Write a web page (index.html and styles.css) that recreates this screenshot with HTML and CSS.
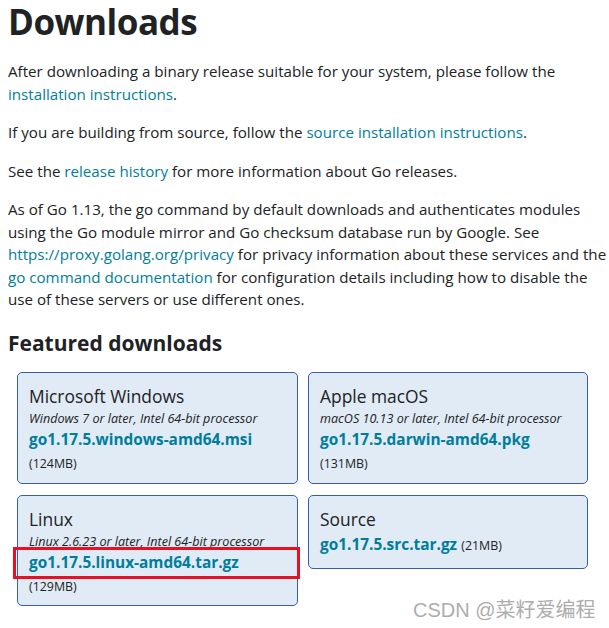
FILE: index.html
```html
<!DOCTYPE html>
<html>
<head>
<meta charset="utf-8">
<link rel="stylesheet" href="styles.css">
</head>
<body>
<main class="page">
  <h1 class="title">Downloads</h1>
  <p class="para">After downloading a binary release suitable for your system, please follow the <a class="link" href="#">installation instructions</a>.</p>
  <p class="para">If you are building from source, follow the <a class="link" href="#">source installation instructions</a>.</p>
  <p class="para">See the <a class="link" href="#">release history</a> for more information about Go releases.</p>
  <p class="para">As of Go 1.13, the go command by default downloads and authenticates modules using the Go module mirror and Go checksum database run by Google. See <a class="link" href="#">https://proxy.golang.org/privacy</a> for privacy information about these services and the <a class="link" href="#">go command documentation</a> for configuration details including how to disable the use of these servers or use different ones.</p>
  <h2 class="subtitle">Featured downloads</h2>
  <div class="grid">
    <div class="card">
      <div class="os">Microsoft Windows</div>
      <div class="req">Windows 7 or later, Intel 64-bit processor</div>
      <a class="file" href="#">go1.17.5.windows-amd64.msi</a>
      <div class="size">(124MB)</div>
    </div>
    <div class="card">
      <div class="os">Apple macOS</div>
      <div class="req">macOS 10.13 or later, Intel 64-bit processor</div>
      <a class="file" href="#">go1.17.5.darwin-amd64.pkg</a>
      <div class="size">(131MB)</div>
    </div>
    <div class="card card-linux">
      <div class="os">Linux</div>
      <div class="req">Linux 2.6.23 or later, Intel 64-bit processor</div>
      <a class="file" href="#">go1.17.5.linux-amd64.tar.gz</a>
      <div class="size">(129MB)</div>
      <span class="highlight"></span>
    </div>
    <div class="card card-source">
      <div class="os">Source</div>
      <div class="inline"><a class="file" href="#">go1.17.5.src.tar.gz</a> <span class="size-inline">(21MB)</span></div>
    </div>
  </div>
</main>
<div class="watermark">CSDN @菜籽爱编程</div>
</body>
</html>
```
FILE: styles.css
```css
html, body {
  margin: 0;
  padding: 0;
  background: #fff;
}
body {
  font-family: "Open Sans", "Noto Sans", sans-serif;
  color: #202224;
  width: 609px;
  height: 628px;
  overflow: hidden;
  position: relative;
}
.page {
  padding: 0 0 0 8px;
}
.title {
  font-size: 35px;
  font-weight: 700;
  margin: 0;
  padding-top: 0;
  line-height: 44px;
  letter-spacing: -0.5px;
}
.para {
  font-size: 15.15px;
  line-height: 22.5px;
  margin: 16px 0 0;
}
.link {
  color: #007d9c;
  text-decoration: none;
}
.subtitle {
  font-size: 21px;
  font-weight: 700;
  margin: 17px 0 0;
  line-height: 30px;
}
.grid {
  display: grid;
  grid-template-columns: 281px 280px;
  column-gap: 10px;
  row-gap: 11px;
  margin: 14px 0 0 9px;
  align-items: start;
}
.card {
  background: #e0ebf5;
  border: 1px solid #375eab;
  border-radius: 5px;
  padding: 11px 11px 9px;
  position: relative;
}
.os {
  font-size: 17.4px;
  line-height: 25px;
}
.req {
  font-size: 12.6px;
  font-style: italic;
  line-height: 19px;
}
.file {
  display: block;
  font-size: 15.4px;
  font-weight: 700;
  color: #007d9c;
  text-decoration: none;
  line-height: 24px;
}
.size {
  font-size: 12.4px;
  line-height: 20px;
  padding-top: 2px;
}
.card-linux {
  padding-bottom: 8px;
}
.inline {
  line-height: 24px;
  padding-bottom: 1px;
}
.inline .file {
  display: inline;
}
.size-inline {
  font-size: 12.4px;
}
.highlight {
  position: absolute;
  left: -5px;
  top: 51px;
  width: 281px;
  height: 26px;
  border: 3px solid #e81123;
}
.watermark {
  position: absolute;
  left: 413px;
  top: 594px;
  font-family: "Liberation Sans", "Noto Sans CJK SC", sans-serif;
  font-size: 20px;
  color: #adadad;
}
```
